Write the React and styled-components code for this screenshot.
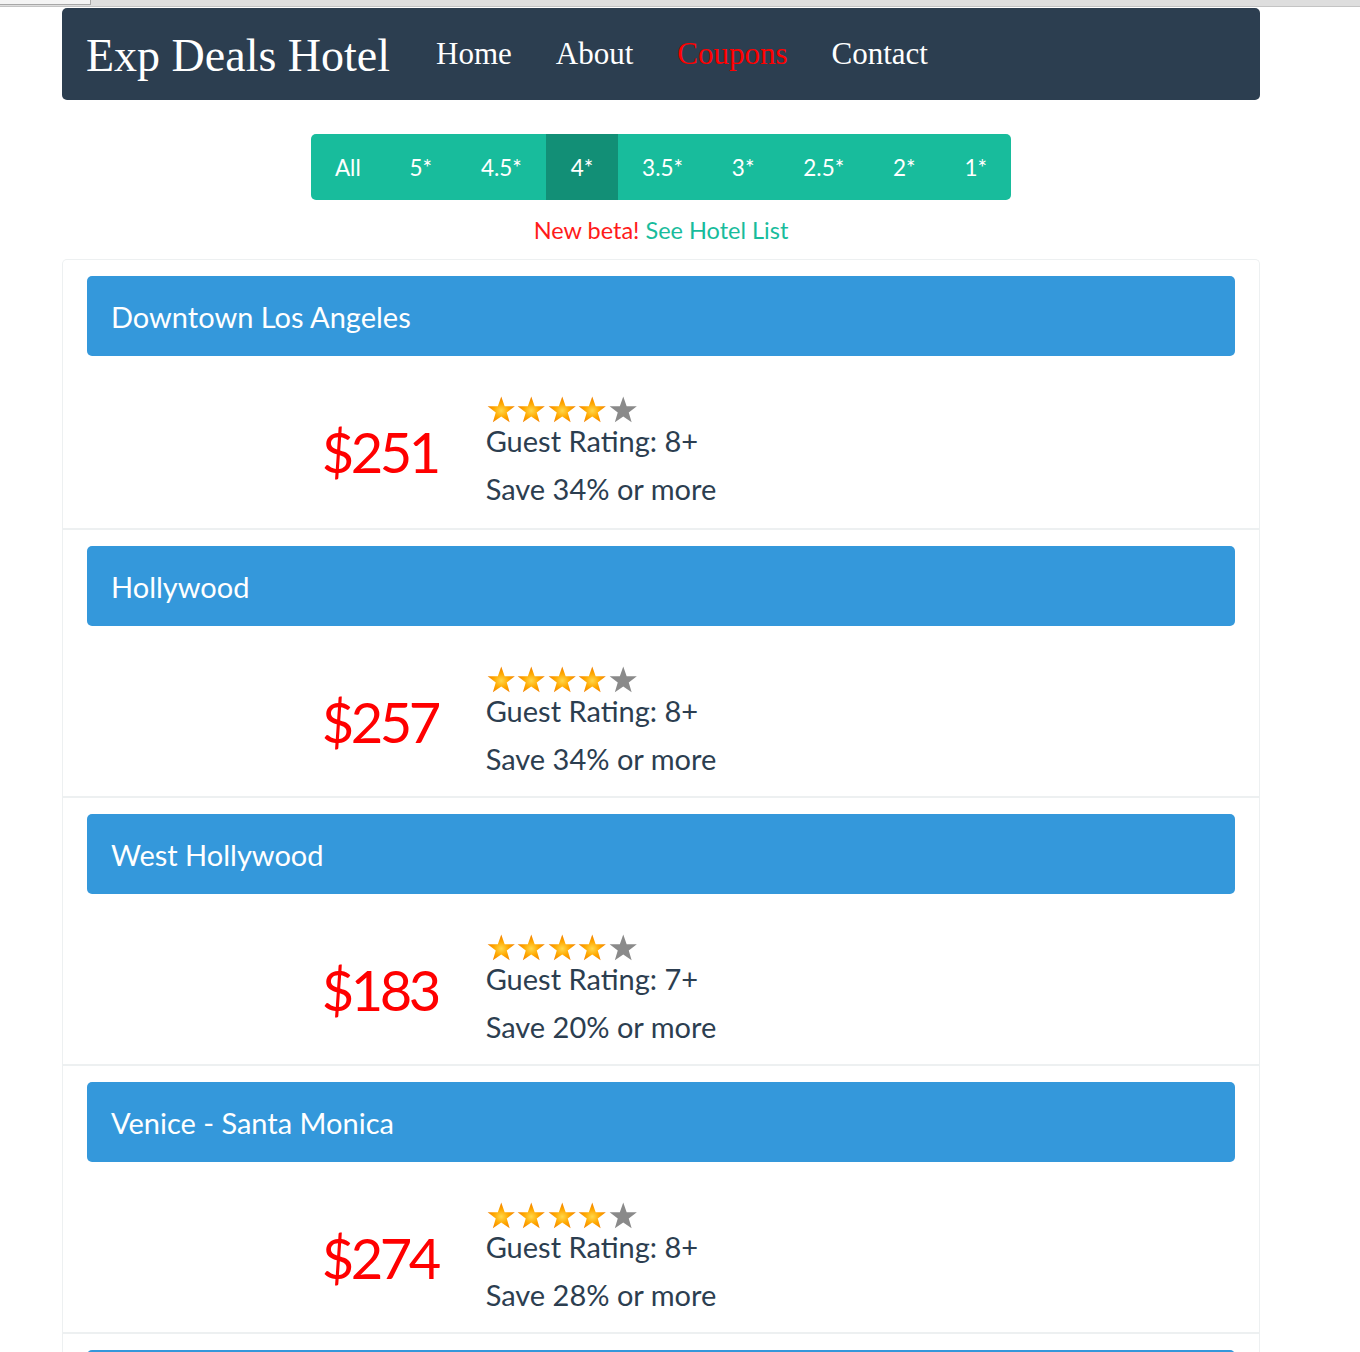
import React from 'react'
import styled, { createGlobalStyle } from 'styled-components'

const GlobalStyle = createGlobalStyle`
  body {
    margin: 0;
    background: #ffffff;
    font-family: Lato, "Liberation Sans", sans-serif;
    color: #2c3e50;
  }
`

const TopStrip = styled.div`
  height: 6px;
  background: #dedede;
  border-bottom: 1px solid #c4c4c4;
`

const Tab = styled.div`
  width: 90px;
  height: 4px;
  background: #f4f4f4;
  border-right: 1px solid #a8a8a8;
  border-bottom: 1px solid #a8a8a8;
`

const Container = styled.div`
  width: 1198px;
  margin: 1px 0 0 62px;
`

const Navbar = styled.nav`
  display: flex;
  align-items: center;
  height: 92px;
  padding: 0 0 0 24px;
  background: #2c3e50;
  border-radius: 5px;
`

const Brand = styled.a`
  font-family: "Liberation Serif", serif;
  font-size: 46px;
  color: #ffffff;
  margin-right: 24px;
  padding-top: 2px;
`

const NavLink = styled.a`
  font-family: "Liberation Serif", serif;
  font-size: 31px;
  padding: 0 22px;
  color: ${p => (p.$active ? '#ff0000' : '#ffffff')};
`

const FilterRow = styled.div`
  display: flex;
  justify-content: center;
  margin-top: 34px;
`

const Filter = styled.div`
  display: flex;
  height: 66px;
  background: #18bc9c;
  border-radius: 5px;
  overflow: hidden;
`

const FilterItem = styled.a`
  display: flex;
  align-items: center;
  padding: 0 24.4px;
  font-size: 22.5px;
  color: #ffffff;
  background: ${p => (p.$active ? '#128f76' : 'transparent')};
`

const Beta = styled.p`
  margin: 17px 0 15px;
  text-align: center;
  font-size: 23.5px;
  line-height: 27px;
  color: #ff1a1a;
`

const BetaLink = styled.a`
  color: #18bc9c;
`

const Panel = styled.div`
  border: 1px solid #edf0f1;
  border-bottom: none;
  border-radius: 5px 5px 0 0;
`

const Item = styled.div`
  padding: 16px 24px 0;
  height: 252px;
  & + & {
    border-top: 2px solid #edf0f1;
    height: 250px;
  }
`

const AreaHeader = styled.div`
  display: flex;
  align-items: center;
  height: 80px;
  padding: 0 24px;
  background: #3498db;
  border-radius: 5px;
  color: #ffffff;
  font-size: 29px;
`

const Body = styled.div`
  display: grid;
  grid-template-columns: 1fr 2fr;
  margin: 0 -24px;
  padding-top: 39px;
`

const Price = styled.div`
  padding: 27px 24px 0;
  text-align: right;
  font-size: 56px;
  line-height: 60px;
  color: #ff0000;
  letter-spacing: -3.5px;
`

const Details = styled.div`
  padding: 0 24px;
  font-size: 29px;
  line-height: 32px;
  color: #2c3e50;
`

const Stars = styled.div`
  display: flex;
  height: 30px;
`

const SaveLine = styled.div`
  margin-top: 16px;
`

const Star = ({ on, id }) => (
  <svg width="30.5" height="30" viewBox="0 0 30 30">
    <defs>
      <radialGradient id={id} cx="50%" cy="55%" r="55%">
        <stop offset="0%" stopColor="#ffd84a" />
        <stop offset="50%" stopColor="#ffa800" />
        <stop offset="100%" stopColor="#f07d00" />
      </radialGradient>
    </defs>
    <path
      d="M15 1.5 L18.4 11.2 L28.6 11.3 L20.5 17.5 L23.4 27.3 L15 21.4 L6.6 27.3 L9.5 17.5 L1.4 11.3 L11.6 11.2 Z"
      fill={on ? `url(#${id})` : '#8a8a8a'}
    />
  </svg>
)

const filters = ['All', '5*', '4.5*', '4*', '3.5*', '3*', '2.5*', '2*', '1*']

const hotels = [
  { area: 'Downtown Los Angeles', price: 251, rating: '8+', save: 34 },
  { area: 'Hollywood', price: 257, rating: '8+', save: 34 },
  { area: 'West Hollywood', price: 183, rating: '7+', save: 20 },
  { area: 'Venice - Santa Monica', price: 274, rating: '8+', save: 28 },
  { area: 'Beverly Hills', price: 299, rating: '8+', save: 25 }
]

export default function App() {
  return (
    <>
      <GlobalStyle />
      <TopStrip><Tab /></TopStrip>
      <Container>
        <Navbar>
          <Brand>Exp Deals Hotel</Brand>
          <NavLink>Home</NavLink>
          <NavLink>About</NavLink>
          <NavLink $active>Coupons</NavLink>
          <NavLink>Contact</NavLink>
        </Navbar>
        <FilterRow>
          <Filter>
            {filters.map(label => (
              <FilterItem key={label} $active={label === '4*'}>{label}</FilterItem>
            ))}
          </Filter>
        </FilterRow>
        <Beta>New beta! <BetaLink>See Hotel List</BetaLink></Beta>
        <Panel>
          {hotels.map((h, i) => (
            <Item key={h.area}>
              <AreaHeader>{h.area}</AreaHeader>
              <Body>
                <Price>${h.price}</Price>
                <Details>
                  <Stars>
                    {[0, 1, 2, 3, 4].map(s => (
                      <Star key={s} on={s < 4} id={`st${i}${s}`} />
                    ))}
                  </Stars>
                  <div>Guest Rating: {h.rating}</div>
                  <SaveLine>Save {h.save}% or more</SaveLine>
                </Details>
              </Body>
            </Item>
          ))}
        </Panel>
      </Container>
    </>
  )
}
